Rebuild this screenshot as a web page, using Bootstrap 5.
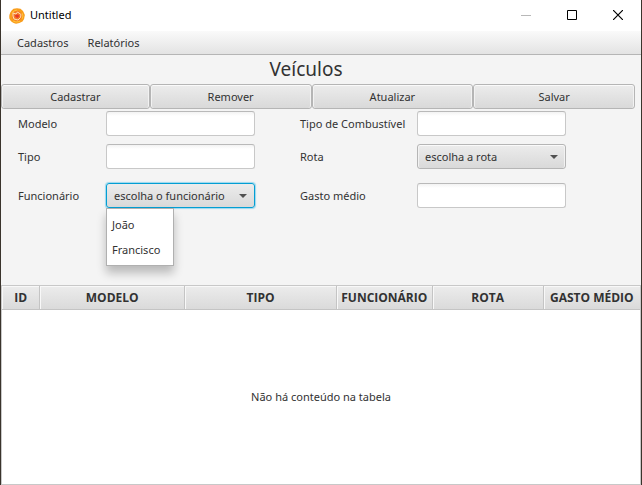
<!DOCTYPE html>
<html lang="pt-BR">
<head>
<meta charset="utf-8">
<meta name="viewport" content="width=device-width, initial-scale=1">
<title>Untitled</title>
<link href="https://cdn.jsdelivr.net/npm/bootstrap@5.3.0/dist/css/bootstrap.min.css" rel="stylesheet">
<style>
  body { font: 11px/16px "Noto Sans", "Open Sans", sans-serif; color: #323232; background: #3a342c; }
  .app-window { min-height: 100vh; margin: 0 1px; background: #f4f4f4; }
  .title-bar { height: 31px; background: #fff; color: #000; padding-left: 8px; }
  .app-name { padding: 0 0 2px 5px; }
  .win-btn { width: 46px; height: 29px; padding: 0; border: 0; background: none; color: #000; line-height: 0; }
  .win-btn:disabled { color: #b8b8b8; }
  .menu-bar { height: 24px; padding-left: 8px; background: linear-gradient(#fafafa, #e3e3e3); border-bottom: 1px solid #b5b5b5; }
  .menu-bar a { padding: 0 8px; margin-right: 3px; color: #323232; text-decoration: none; }
  .page-title { font-size: 19px; line-height: 29px; font-weight: 400; padding-right: 30px; }
  .tool-row { display: grid; grid-template-columns: 149fr 162fr 162fr 162fr; padding-right: 6px; }
  .fx-face { height: 25px; border: 1px solid #b5b5b5; border-radius: 3px; color: #323232; background: linear-gradient(#ececec, #d9d9d9); box-shadow: inset 0 1px #fafafa, inset 1px 0 #f2f2f2, inset -1px 0 #f2f2f2; }
  .tool-row button { padding: 0; }
  .form-area { display: grid; grid-template-columns: 105fr 149fr 162fr 149fr 75fr; grid-template-rows: 33px 39px 33px; align-items: start; padding-top: 2px; height: 176px; }
  .form-area label { line-height: 25px; white-space: nowrap; padding-left: 17px; }
  .form-area .label-a { grid-column: 1; }
  .form-area .label-b { padding-left: 45px; grid-column: 3; }
  .fx-input { width: 100%; height: 25px; padding: 0 7px; border: 1px solid #c8c8c8; border-top-color: #b9b9b9; border-radius: 3px; background: linear-gradient(#f3f3f3, #fff 4px); }
  .fx-select { display: block; width: 100%; padding: 0 22px 0 7px; appearance: none; }
  .fx-select.is-open { border-color: #039ed3; box-shadow: 0 0 1px 1px #9bd8ee; outline: 0; }
  .select-box { position: relative; }
  .select-box > svg { position: absolute; right: 8px; top: 11px; pointer-events: none; }
  .option-popup { position: absolute; z-index: 5; left: 0; top: 25px; min-width: 68px; padding: 3px; border: 1px solid #b0b0b0; background: #fff; box-shadow: 0 7px 9px rgba(0,0,0,.24); }
  .option-popup li { padding: 0 2px; line-height: 25px; }
  .data-grid { table-layout: fixed; border: 1px solid #c8c8c8; background: #fff; border-collapse: separate; border-spacing: 0; }
  .data-grid th { height: 24px; padding: 0; font: bold 12px/16px "Open Sans", "Noto Sans", sans-serif; text-align: center; white-space: nowrap; background: linear-gradient(#ececec, #dadada); border-right: 1px solid #c4c4c4; border-bottom: 1px solid #c4c4c4; box-shadow: inset 1px 1px #f8f8f8; }
  .data-grid th:last-child { border-right: 0; }
  .data-grid td { text-align: center; vertical-align: middle; }
  .c-id { width: 6%; } .c-modelo { width: 22.7%; } .c-tipo { width: 23.8%; }
  .c-func { width: 15%; } .c-rota { width: 17.4%; }
</style>
<script src="https://cdn.jsdelivr.net/npm/bootstrap@5.3.0/dist/js/bootstrap.bundle.min.js"></script>
</head>
<body>
<div class="app-window d-flex flex-column">
  <header class="title-bar d-flex align-items-start justify-content-between">
    <div class="d-flex align-items-center h-100">
      <svg width="16" height="16" viewBox="0 0 16 16" aria-hidden="true">
        <path d="M4.500.8Q8-.5 11.500.8Q15 3 15.700 6.500Q16 10.500 13.500 13.500Q10 16 6 15.600Q2 14.500.4 10.500Q-.5 5 4.500.8Z" fill="#f99d1c"/>
        <path d="M3 5l2-2 3-1M13 5l1 3-1 3M4 13l3 1 4-.5" fill="none" stroke="#ffc23a"/>
        <circle cx="8" cy="8" r="5" fill="#f47a2a"/>
        <path d="M4 5l3 1 1.500-2L12 6.500l-.5 3L9 12l-4-1L4 8z" fill="none" stroke="#ffe1b5"/>
        <path d="M6 7l3-.5 1.500 1.500-2 2-2-1z" fill="#e6382a"/>
      </svg>
      <span class="app-name">Untitled</span>
    </div>
    <div class="d-flex">
      <button class="win-btn" type="button" disabled aria-label="Minimizar"><svg width="10" height="10" viewBox="0 0 10 10"><path d="M0 5.500h10" stroke="currentColor"/></svg></button>
      <button class="win-btn" type="button" aria-label="Maximizar"><svg width="10" height="10" viewBox="0 0 10 10"><path d="M.5.5h9v9h-9z" fill="none" stroke="currentColor"/></svg></button>
      <button class="win-btn" type="button" aria-label="Fechar"><svg width="10" height="10" viewBox="0 0 10 10"><path d="M0 0l10 10M10 0L0 10" stroke="currentColor" stroke-width="1.200"/></svg></button>
    </div>
  </header>
  <nav class="menu-bar d-flex align-items-center">
    <a href="#">Cadastros</a>
    <a href="#">Relatórios</a>
  </nav>
  <h1 class="page-title text-center m-0">Veículos</h1>
  <div class="tool-row">
    <button class="fx-face" type="button">Cadastrar</button>
    <button class="fx-face" type="button">Remover</button>
    <button class="fx-face" type="button">Atualizar</button>
    <button class="fx-face" type="button">Salvar</button>
  </div>
  <form class="form-area">
    <label class="label-a" for="modelo">Modelo</label>
    <input class="fx-input" id="modelo" type="text">
    <label class="label-b" for="combustivel">Tipo de Combustível</label>
    <input class="fx-input" id="combustivel" type="text">
    <label class="label-a" for="tipo">Tipo</label>
    <input class="fx-input" id="tipo" type="text">
    <label class="label-b" for="rota">Rota</label>
    <div class="select-box">
      <select class="fx-face fx-select" id="rota"><option>escolha a rota</option></select>
      <svg width="8" height="4" viewBox="0 0 8 4" aria-hidden="true"><path d="M0 0h8L4 4z" fill="#505050"/></svg>
    </div>
    <label class="label-a" for="funcionario">Funcionário</label>
    <div class="select-box">
      <select class="fx-face fx-select is-open" id="funcionario"><option>escolha o funcionário</option><option>João</option><option>Francisco</option></select>
      <svg width="8" height="4" viewBox="0 0 8 4" aria-hidden="true"><path d="M0 0h8L4 4z" fill="#505050"/></svg>
      <ul class="option-popup list-unstyled m-0">
        <li>João</li>
        <li>Francisco</li>
      </ul>
    </div>
    <label class="label-b" for="gasto">Gasto médio</label>
    <input class="fx-input" id="gasto" type="text">
  </form>
  <div class="flex-grow-1 d-flex">
    <table class="data-grid w-100">
      <thead>
        <tr><th class="c-id">ID</th><th class="c-modelo">MODELO</th><th class="c-tipo">TIPO</th><th class="c-func">FUNCIONÁRIO</th><th class="c-rota">ROTA</th><th>GASTO MÉDIO</th></tr>
      </thead>
      <tbody>
        <tr><td colspan="6">Não há conteúdo na tabela</td></tr>
      </tbody>
    </table>
  </div>
</div>
</body>
</html>
